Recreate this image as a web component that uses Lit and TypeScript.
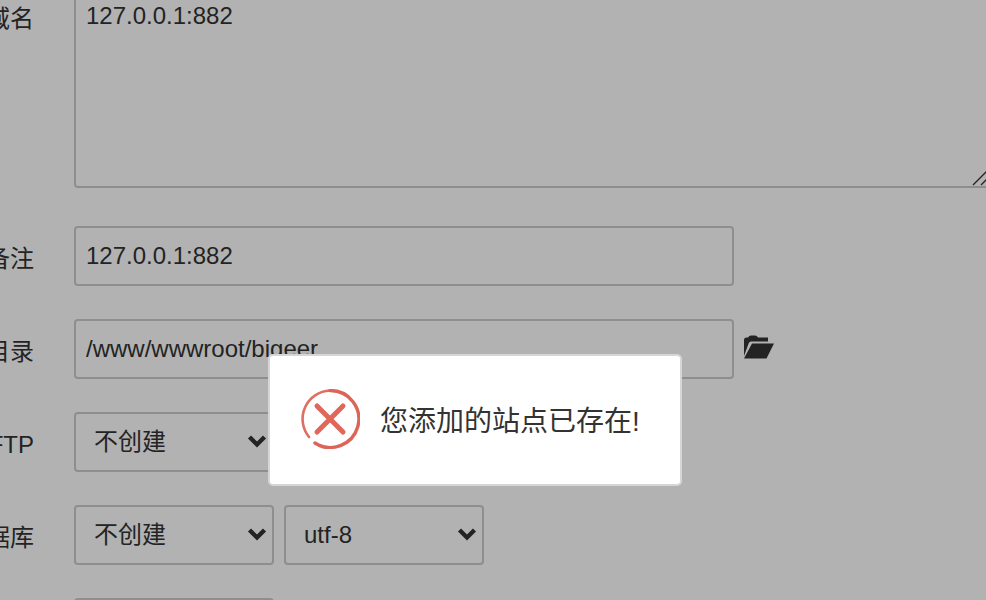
import { LitElement, html, css, svg } from "lit";
import { customElement } from "lit/decorators.js";

const chevron = svg`<svg class="chev" width="20" height="15" viewBox="0 0 20 15"><path d="M2.5 3 L10 10.5 L17.5 3" fill="none" stroke="#333" stroke-width="4.4"/></svg>`;

@customElement("app-root")
export class AppRoot extends LitElement {
  static styles = css`
    :host {
      display: block;
      position: relative;
      width: 986px;
      height: 600px;
      overflow: hidden;
      background: #fff;
      font-family: "Liberation Sans", "Noto Sans CJK SC", sans-serif;
      font-size: 24px;
      color: #333;
    }
    .form {
      display: flex;
      flex-direction: column;
      gap: 30px;
      margin: -14px 0 0 -66px;
    }
    .row {
      display: flex;
      align-items: flex-start;
      gap: 40px;
    }
    .first { margin-bottom: 8px; position: relative; }
    .label {
      flex: none;
      width: 100px;
      text-align: right;
      line-height: 60px;
      padding-top: 3px;
      white-space: nowrap;
    }
    .control {
      box-sizing: border-box;
      display: block;
      height: 60px;
      margin: 0;
      padding: 0 10px;
      border: 2px solid #ccc;
      border-radius: 4px;
      background: #fff;
      color: #333;
      font: inherit;
      outline: none;
    }
    .text { width: 660px; }
    .area {
      width: 1000px;
      height: 202px;
      flex: none;
      padding: 11px 10px;
      resize: none;
      line-height: 34px;
      overflow: hidden;
    }
    .grip {
      position: absolute;
      left: 1038px;
      top: 183px;
    }
    .folder { flex: none; margin: 16px 0 0 -30px; }
    .selwrap { position: relative; width: 200px; flex: none; }
    .selwrap + .selwrap { margin-left: -30px; }
    select.control {
      width: 100%;
      appearance: none;
      -webkit-appearance: none;
      padding: 0 18px 2px;
    }
    .chev {
      position: absolute;
      right: 7px;
      top: 22px;
      pointer-events: none;
    }
    .disabled {
      width: 200px;
      background: #eee;
    }
    .mask {
      position: absolute;
      inset: 0;
      background: rgba(0, 0, 0, 0.3);
    }
    .dialog {
      position: absolute;
      left: 268px;
      top: 354px;
      box-sizing: border-box;
      width: 414px;
      height: 132px;
      display: flex;
      align-items: center;
      gap: 20px;
      padding-left: 30px;
      padding-bottom: 2px;
      background: #fff;
      border: 2px solid #d6d6d6;
      border-radius: 5px;
      font-size: 28px;
      white-space: nowrap;
    }
    .icon { flex: none; }
  `;

  render() {
    return html`
      <div class="form">
        <div class="row first">
          <div class="label">域名</div>
          <textarea class="control area" .value=${"127.0.0.1:882"}></textarea>
          <svg class="grip" width="16" height="18" viewBox="0 0 16 18">
            <path d="M1 16 L15 2 M9 16 L15 10" stroke="#333" stroke-width="1.4" fill="none" />
          </svg>
        </div>
        <div class="row">
          <div class="label">备注</div>
          <input class="control text" .value=${"127.0.0.1:882"} />
        </div>
        <div class="row">
          <div class="label">根目录</div>
          <input class="control text" .value=${"/www/wwwroot/bigeer"} />
          <svg class="folder" width="30" height="24" viewBox="0 0 30 24">
            <path fill="#333" d="M0 21 V5 Q0 2.5 2.5 2.5 H4 Q5 0.5 7 0.5 H11 Q13 0.5 14 2.5 H24 V6.5 H7 Q5.5 6.5 4.8 8 Z" />
            <path fill="#333" d="M8 8.5 H30 L22.5 23.5 H0 Z" />
          </svg>
        </div>
        <div class="row">
          <div class="label">FTP</div>
          <div class="selwrap">
            <select class="control"><option>不创建</option></select>
            ${chevron}
          </div>
        </div>
        <div class="row">
          <div class="label">数据库</div>
          <div class="selwrap">
            <select class="control"><option>不创建</option></select>
            ${chevron}
          </div>
          <div class="selwrap">
            <select class="control"><option>utf-8</option></select>
            ${chevron}
          </div>
        </div>
        <div class="row">
          <div class="label"></div>
          <input class="control disabled" disabled />
        </div>
      </div>
      <div class="mask"></div>
      <div class="dialog">
        <svg class="icon" width="60" height="60" viewBox="0 0 60 60">
          <defs><filter id="b" x="-10%" y="-10%" width="120%" height="120%"><feGaussianBlur stdDeviation="0.6" /></filter></defs>
          <g filter="url(#b)" fill="none" stroke-linecap="round">
            <path d="M9 48 A28.5 28.5 0 0 1 30 1.5" stroke="#de6f62" stroke-width="2.6" />
            <path d="M30 1.5 A28.5 28.5 0 1 1 15 54" stroke="#dc6558" stroke-width="3.4" />
            <path d="M17 17 L43 43 M43 17 L17 43" stroke="#e0675a" stroke-width="5" />
          </g>
        </svg>
        <span>您添加的站点已存在!</span>
      </div>
    `;
  }
}
